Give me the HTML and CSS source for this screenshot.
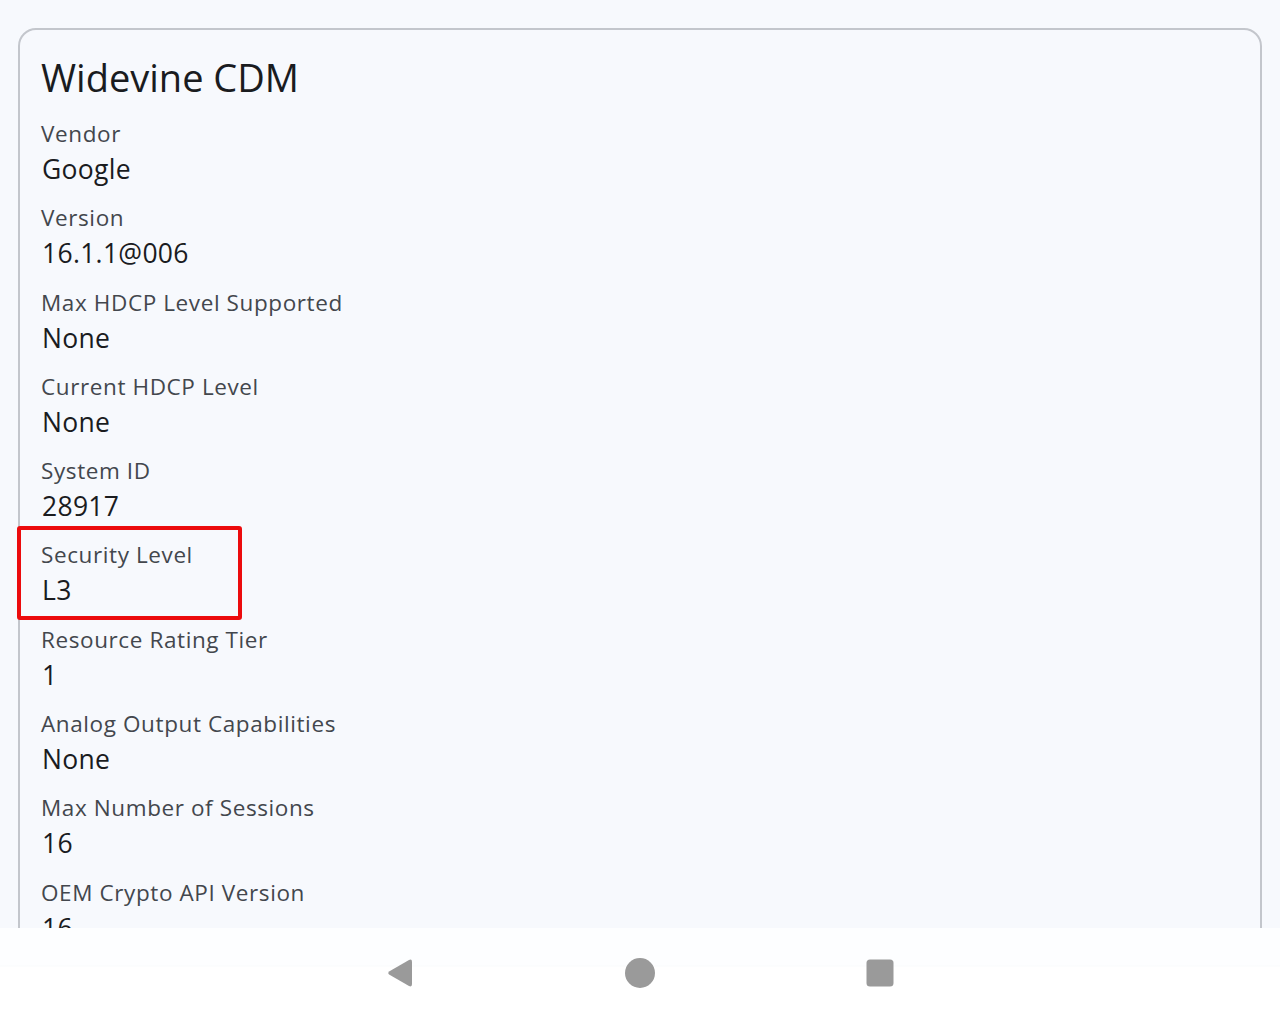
FILE: index.html
```html
<!DOCTYPE html>
<html lang="en">
<head>
    <meta charset="UTF-8">
    <meta name="viewport" content="width=device-width, initial-scale=1.0">
    <title>Widevine CDM</title>
    <link rel="stylesheet" href="styles.css">
</head>
<body>
    <div class="screen">
        <div class="content">
            <div class="card">
                <h1>Widevine CDM</h1>
                <div class="item">
                    <div class="label">Vendor</div>
                    <div class="value">Google</div>
                </div>
                <div class="item">
                    <div class="label">Version</div>
                    <div class="value">16.1.1@006</div>
                </div>
                <div class="item">
                    <div class="label">Max HDCP Level Supported</div>
                    <div class="value">None</div>
                </div>
                <div class="item">
                    <div class="label">Current HDCP Level</div>
                    <div class="value">None</div>
                </div>
                <div class="item">
                    <div class="label">System ID</div>
                    <div class="value">28917</div>
                </div>
                <div class="item highlight">
                    <div class="label">Security Level</div>
                    <div class="value">L3</div>
                </div>
                <div class="item">
                    <div class="label">Resource Rating Tier</div>
                    <div class="value">1</div>
                </div>
                <div class="item">
                    <div class="label">Analog Output Capabilities</div>
                    <div class="value">None</div>
                </div>
                <div class="item">
                    <div class="label">Max Number of Sessions</div>
                    <div class="value">16</div>
                </div>
                <div class="item">
                    <div class="label">OEM Crypto API Version</div>
                    <div class="value">16</div>
                </div>
            </div>
        </div>
        <!-- barra de navegação do sistema -->
        <div class="navbar">
            <svg class="nav-icon" width="30" height="32" viewBox="0 0 30 32">
                <path d="M24 3 Q27 1.5 27 5 L27 27 Q27 30.5 24 29 L4.5 17.8 Q2 16 4.5 14.2 Z" fill="#9a9a9a"/>
            </svg>
            <svg class="nav-icon" width="32" height="32" viewBox="0 0 32 32">
                <circle cx="16" cy="16" r="15" fill="#9a9a9a"/>
            </svg>
            <svg class="nav-icon" width="30" height="30" viewBox="0 0 30 30">
                <rect x="1.5" y="1.5" width="27" height="27" rx="3.5" fill="#9a9a9a"/>
            </svg>
        </div>
    </div>
</body>
</html>
```

FILE: styles.css
```css
body {
    margin: 0;
    padding: 0;
    font-family: "Open Sans", "Noto Sans", sans-serif;
    background-color: #f7f9fd;
    color: #1a1c1f;
}
.screen {
    width: 1280px;
    height: 1018px;
    display: flex;
    flex-direction: column;
    overflow: hidden;
}
.content {
    height: 928px;
    overflow: hidden;
    padding: 28px 18px 0 18px;
    box-sizing: border-box;
}
.card {
    border: 2px solid #c3c6cc;
    border-radius: 18px;
    padding: 23px 20px 20px 21px;
}
h1 {
    margin: 0 0 18px 0;
    font-size: 38px;
    line-height: 48px;
    font-weight: 400;
    color: #1a1c1f;
}
.item {
    margin-bottom: 16.3px;
}
.label {
    font-size: 22.5px;
    line-height: 30px;
    letter-spacing: 0.6px;
    color: #43474d;
}
.value {
    margin-top: 2px;
    padding-left: 1px;
    font-size: 26.5px;
    line-height: 36px;
    letter-spacing: 0.3px;
    color: #1a1c1f;
}
.highlight {
    position: relative;
}
.highlight::after {
    content: "";
    position: absolute;
    left: -24px;
    top: -14px;
    width: 225px;
    height: 94px;
    box-sizing: border-box;
    border: 4px solid #ec0b0d;
    border-radius: 3px;
}
.navbar {
    flex: 1;
    background: linear-gradient(#fdfeff 0, #fdfeff 37px, #f9fbfc 38px, #ffffff 39px);
    display: flex;
    justify-content: center;
    align-items: center;
    gap: 209px;
}
.nav-icon {
    display: block;
}
```
